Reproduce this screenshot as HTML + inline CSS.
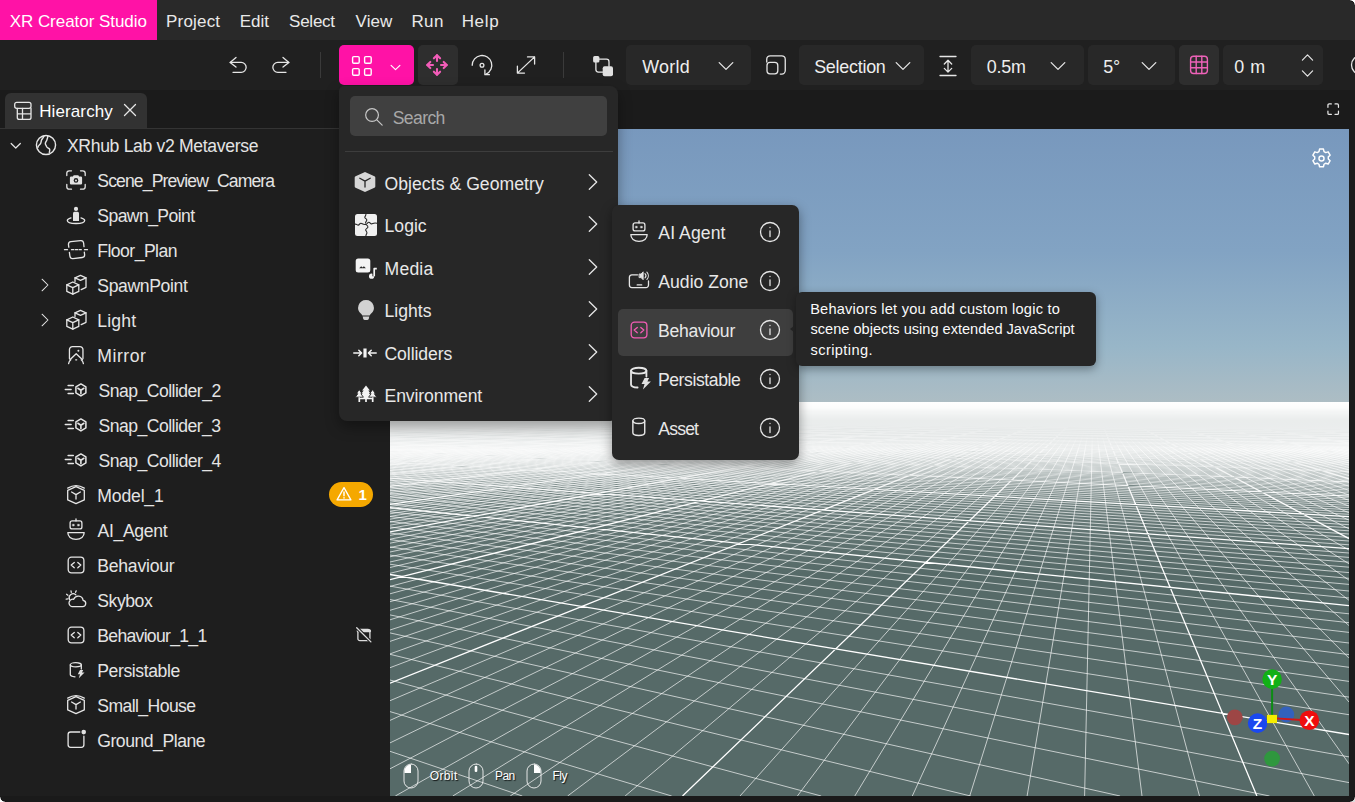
<!DOCTYPE html>
<html lang="en"><head><meta charset="utf-8"><title>XR Creator Studio</title>
<style>
*{box-sizing:border-box;margin:0;padding:0}
html,body{width:1355px;height:802px;overflow:hidden;background:#1b1b1b}
body{position:relative;font-family:"Liberation Sans",sans-serif;color:#f2f2f2;font-size:17px}
.abs{position:absolute}
svg{display:block;overflow:visible}
.ic{position:absolute;fill:none;stroke:#e6e6e6;stroke-width:1.3;stroke-linecap:round;stroke-linejoin:round}
.t{position:absolute;white-space:nowrap;line-height:20px;height:20px}
#menubar{left:0;top:0;width:1355px;height:40px;background:#292929}
#brand{left:0;top:0;width:157px;height:40px;background:#ff12a6}
.mi{color:#e9e9e9}
#toolbar{left:0;top:40px;width:1355px;height:50px;background:#202020}
.tb{position:absolute;top:45px;height:40px;border-radius:5px;background:#282828}
.tbt{color:#eeeeee}
.sep{position:absolute;top:52px;width:1px;height:26px;background:#3a3a3a}
#tabrow{left:0;top:90px;width:1355px;height:39px;background:#1b1b1b}
#tab{left:5px;top:93px;width:142px;height:35.5px;background:#323232;border-radius:6px 6px 0 0}
#tabline{left:0;top:128px;width:390px;height:1px;background:#343434}
#left{left:0;top:129px;width:390px;height:667px;background:#1e1e1e}
.row{color:#e4e4e4}
#vp{left:390px;top:129px;width:959px;height:667px;overflow:hidden;background:#566a68}
.vp{position:absolute;left:0;top:-1px}
#rightedge{left:1349px;top:90px;width:6px;height:712px;background:#1b1b1b}
#bottomedge{left:0;top:795.7px;width:1355px;height:6.3px;background:#1a1a1a}
#menu{left:339px;top:85.7px;width:279px;height:335.3px;background:#272727;border-radius:5px 8px 8px 8px;box-shadow:0 6px 14px rgba(0,0,0,.35)}
#search{left:11px;top:10.3px;width:257px;height:39.7px;background:#404040;border-radius:5px}
#mdiv{left:6px;top:65.2px;width:268px;height:1px;background:#3d3d3d}
.m1{color:#e8e8e8}
#sub{left:612px;top:205px;width:187px;height:255px;background:#272727;border-radius:7px;box-shadow:0 4px 12px rgba(0,0,0,.4)}
#hl{left:6px;top:104px;width:174.5px;height:46.5px;background:#3e3e3e;border-radius:5px}
#tip{left:796px;top:291.7px;width:300px;height:74.8px;background:#262626;border-radius:6px;box-shadow:0 3px 10px rgba(0,0,0,.35)}
.tp{color:#fafafa}
#badge{left:328.8px;top:481.7px;width:44.4px;height:25.3px;border-radius:13px;background:#f5a800}
.hint{color:#fff;text-shadow:1px 1px 1px rgba(0,0,0,.8)}
.cn{position:absolute;width:5px;height:5px}
#ctr{right:0;top:0;background:radial-gradient(circle at 0 100%,rgba(255,255,255,0) 3.6px,#000 4.2px,#fff 5px)}
#cbr{right:0;bottom:0;background:radial-gradient(circle at 0 0,rgba(255,255,255,0) 3.6px,#000 4.2px,#ddd 5px)}
#cbl{left:0;bottom:0;background:radial-gradient(circle at 100% 0,rgba(255,255,255,0) 3.6px,#000 4.2px,#fff 5px)}

</style></head>
<body>
<div class="abs" id="menubar"></div><div class="abs" id="brand"></div>
<div class="t mi" style="left:9.66px;top:12px;font-size:17px;letter-spacing:-0.040px;color:#fff">XR Creator Studio</div>
<div class="t mi" style="left:166.04px;top:12px;font-size:17px;letter-spacing:0.182px;">Project</div>
<div class="t mi" style="left:239.64px;top:12px;font-size:17px;letter-spacing:0.040px;">Edit</div>
<div class="t mi" style="left:289.04px;top:12px;font-size:17px;letter-spacing:-0.242px;">Select</div>
<div class="t mi" style="left:355.60px;top:12px;font-size:17px;letter-spacing:0.017px;">View</div>
<div class="t mi" style="left:411.44px;top:12px;font-size:17px;letter-spacing:0.392px;">Run</div>
<div class="t mi" style="left:461.64px;top:12px;font-size:17px;letter-spacing:0.702px;">Help</div>
<div class="abs" id="toolbar"></div>
<svg class="ic" style="left:227.5px;top:55.0px;" width="20" height="20" viewBox="0 0 20 20"><path d="M8 2.5L2.1 7.4 8 12.1"/><path d="M2.3 7.400H13.200a4.95 4.95 0 0 1 0 9.900H5"/></svg><svg class="ic" style="left:271.4px;top:55.0px;" width="20" height="20" viewBox="0 0 20 20"><path d="M12 2.5L17.9 7.4 12 12.1"/><path d="M17.7 7.400H6.800a4.95 4.95 0 0 0 0 9.900H15"/></svg>
<div class="sep" style="left:320px"></div><div class="sep" style="left:563px"></div>
<div class="tb" style="left:339.2px;width:74.6px;background:#ff12a6"></div>
<svg class="ic" style="left:350.4px;top:53.6px;stroke:#fff;stroke-width:1.4" width="24" height="24" viewBox="0 0 24 24"><rect x="2.6" y="2.6" width="6.6" height="6.6" rx="1.2"/><rect x="14.6" y="2.6" width="6.6" height="6.6" rx="1.2"/><rect x="2.6" y="14.6" width="6.6" height="6.6" rx="1.2"/><rect x="14.6" y="14.6" width="6.6" height="6.6" rx="1.2"/></svg><svg class="ic" style="left:389.1px;top:60.5px;stroke:#fff;stroke-width:1.8" width="13" height="13" viewBox="0 0 20 20"><path d="M3.2 6.6l6.8 6.8 6.8-6.8"/></svg>
<div class="tb" style="left:418px;width:40px;background:#2e2e2e"></div>
<svg class="ic" style="left:425.4px;top:52.9px;stroke:#f25cb8;stroke-width:2.1" width="24" height="24" viewBox="0 0 24 24"><path d="M12 2.4V8M12 16v5.6M2.4 12H8M16 12h5.6"/><path d="M8.9 5.3L12 2.2l3.1 3.1M8.9 18.7L12 21.8l3.1-3.1M5.3 8.9L2.2 12l3.1 3.1M18.7 8.9L21.8 12l-3.1 3.1"/></svg>
<svg class="ic" style="left:469.6px;top:53.4px;" width="24" height="24" viewBox="0 0 24 24"><path d="M2.2 12.3A9.8 9.8 0 1 1 16.1 21.2"/><path d="M14.9 17V21.7H19.4"/><circle cx="12" cy="12.3" r="1.9"/></svg><svg class="ic" style="left:513.7px;top:53.2px;" width="24" height="24" viewBox="0 0 24 24"><path d="M3.4 20.100L20.6 3.900M13.5 3.900H20.600V11M3.4 13.200V20.100H10.5"/></svg><svg class="ic" style="left:590.5px;top:53.5px;" width="24" height="24" viewBox="0 0 24 24"><rect x="2.1" y="2.1" width="6.3" height="6.4" rx="1.5" fill="#e0e0e0" stroke="none"/><rect x="11.7" y="12.2" width="10.3" height="10" rx="2" fill="#e0e0e0" stroke="none"/><path d="M8.3 5.200H15.500a2.5 2.5 0 0 1 2.5 2.500V12.200M4.9 8.500V15.600a2.5 2.5 0 0 0 2.5 2.500H11.7"/></svg>
<div class="tb" style="left:626px;width:125px"></div><div class="t tbt" style="left:642.30px;top:56.5px;font-size:17.9px;letter-spacing:0.228px;">World</div><svg class="ic" style="left:715.5px;top:56.3px;" width="20" height="20" viewBox="0 0 20 20"><path d="M3.2 6.6l6.8 6.8 6.8-6.8"/></svg>
<svg class="ic" style="left:763.8px;top:53.0px;" width="24" height="24" viewBox="0 0 24 24"><path d="M2.75 9V6.300a3.5 3.5 0 0 1 3.5-3.500H17.750a3.5 3.5 0 0 1 3.5 3.500V17.600a3.5 3.5 0 0 1-3.5 3.500H16.3"/><rect x="3" y="9.4" width="10.8" height="11.4" rx="3"/></svg>
<div class="tb" style="left:799px;width:125px"></div><div class="t tbt" style="left:814.19px;top:56.5px;font-size:17.9px;letter-spacing:-0.247px;">Selection</div><svg class="ic" style="left:892.6px;top:56.3px;" width="20" height="20" viewBox="0 0 20 20"><path d="M3.2 6.6l6.8 6.8 6.8-6.8"/></svg>
<svg class="ic" style="left:935.5px;top:53.5px;" width="24" height="24" viewBox="0 0 24 24"><path d="M4 2.500H20M4 21.500H20M12 6.300V18.100M8.3 10L12 6.3 15.7 10M8.3 14.400L12 18.100l3.7-3.7"/></svg>
<div class="tb" style="left:971px;width:113px"></div><div class="t tbt" style="left:986.77px;top:56.5px;font-size:17.9px;letter-spacing:-0.213px;">0.5m</div><svg class="ic" style="left:1047.7px;top:56.3px;" width="20" height="20" viewBox="0 0 20 20"><path d="M3.2 6.6l6.8 6.8 6.8-6.8"/></svg>
<div class="tb" style="left:1088px;width:87px"></div><div class="t tbt" style="left:1103.28px;top:56.5px;font-size:17.9px;letter-spacing:-0.304px;">5°</div><svg class="ic" style="left:1139.4px;top:56.3px;" width="20" height="20" viewBox="0 0 20 20"><path d="M3.2 6.6l6.8 6.8 6.8-6.8"/></svg>
<div class="tb" style="left:1179px;width:40px;background:#2e2e2e"></div><svg class="ic" style="left:1186.5px;top:53.4px;stroke:#ee62b8;stroke-width:1.4" width="24" height="24" viewBox="0 0 24 24"><rect x="3.6" y="3.3" width="16.8" height="17.2" rx="3"/><path d="M3.6 9h16.800M3.6 14.800h16.800M9.2 3.300v17.200M14.8 3.300v17.2"/></svg>
<div class="tb" style="left:1223px;width:100px"></div><div class="t tbt" style="left:1234.37px;top:56.5px;font-size:17.9px;letter-spacing:0.449px;">0 m</div><svg class="ic" style="left:1300.0px;top:49.5px;stroke-width:1.6" width="15" height="15" viewBox="0 0 20 20"><path d="M3.2 13.4l6.8-6.8 6.8 6.8"/></svg><svg class="ic" style="left:1300.0px;top:65.5px;stroke-width:1.6" width="15" height="15" viewBox="0 0 20 20"><path d="M3.2 6.6l6.8 6.8 6.8-6.8"/></svg>
<svg class="ic" style="left:1350px;top:55px" width="5" height="20" viewBox="0 0 5 20"><circle cx="11" cy="10" r="9.5"/></svg>
<div class="abs" id="tabrow"></div><div class="abs" id="tab"></div><div class="abs" id="left"></div><div class="abs" id="tabline"></div>
<svg class="ic" style="left:12.5px;top:100.8px;" width="20" height="20" viewBox="0 0 20 20"><rect x="1.7" y="1.4" width="16.3" height="5.9" rx="2"/><path d="M4.3 7.300V16.400a2 2 0 0 0 2 2H16a2 2 0 0 0 2-2V7.300M9.5 7.300V18.400M4.3 12.900H18"/></svg><div class="t mi" style="left:39.14px;top:101.5px;font-size:17px;letter-spacing:0.125px;color:#fff">Hierarchy</div><svg class="ic" style="left:120.1px;top:100.4px;" width="20" height="20" viewBox="0 0 20 20"><path d="M4.5 4.5l11 11M15.5 4.5l-11 11"/></svg>
<svg class="ic" style="left:1326.8px;top:102.8px;stroke-width:2" width="12.4" height="12.4" viewBox="0 0 20 20"><path d="M1.5 7V3.500a2 2 0 0 1 2-2H7M13 1.500h3.500a2 2 0 0 1 2 2V7M18.5 13v3.500a2 2 0 0 1-2 2H13M7 18.500H3.500a2 2 0 0 1-2-2V13"/></svg>
<svg class="ic" style="left:8.8px;top:138.6px;stroke-width:1.8" width="13.5" height="13.5" viewBox="0 0 20 20"><path d="M3.2 6.6l6.8 6.8 6.8-6.8"/></svg><svg class="ic" style="left:34.6px;top:133.5px;" width="22" height="22" viewBox="0 0 20 20"><circle cx="10" cy="10" r="8.7"/><path d="M8.2 1.7c-.4 1.5-1.5 2.3-2.2 3.7-.6 1.2-.200 2.6-1.2 3.7C4 10 3 10.5 2.6 12M11.5 1.500c.6 1.2-.3 2.3-.6 3.6-.3 1.4-1.4 2.1-1.5 3.4-.1 1.3 1 1.9 1.2 3 .3 1.3 1.8 1.3 2.6 2.2.7.8 0 1.9-.2 3"/></svg><div class="t row" style="left:66.95px;top:136px;font-size:17.6px;letter-spacing:-0.331px;">XRhub Lab v2 Metaverse</div>
<svg class="ic" style="left:65.5px;top:169.5px;" width="20" height="20" viewBox="0 0 20 20"><path d="M0.8 5.500V3.300A2.5 2.5 0 0 1 3.3.8H5.500M14.5.8h2.200a2.5 2.5 0 0 1 2.5 2.500V5.500M19.2 14.500v2.200a2.5 2.5 0 0 1-2.5 2.500H14.500M5.5 19.200H3.300a2.5 2.5 0 0 1-2.5-2.500V14.5"/><path d="M3.9 7.800a1.3 1.3 0 0 1 1.3-1.300h1.7l.8-1.200h4.600l.8 1.200h1.7a1.3 1.3 0 0 1 1.3 1.300v5.500a1.3 1.3 0 0 1-1.3 1.300H5.200a1.3 1.3 0 0 1-1.3-1.300z" fill="#e2e2e2" stroke="none"/><circle cx="10" cy="10.4" r="2.3" fill="#1e1e1e" stroke="none"/><circle cx="10" cy="10.4" r="1" fill="#e2e2e2" stroke="none"/></svg><div class="t row" style="left:97.31px;top:171px;font-size:17.6px;letter-spacing:-0.887px;">Scene_Preview_Camera</div>
<svg class="ic" style="left:65.5px;top:204.5px;" width="20" height="20" viewBox="0 0 20 20"><circle cx="10" cy="3.9" r="2.1" fill="#e2e2e2" stroke="none"/><path d="M7 8.300a1.5 1.5 0 0 1 1.5-1.500h3A1.5 1.5 0 0 1 13 8.300V16H7z" fill="#e2e2e2" stroke="none"/><path d="M5 12.800c-2.2.6-3.7 1.6-3.7 2.7 0 1.8 3.9 3 8.7 3s8.7-1.2 8.7-3c0-1.1-1.5-2.1-3.7-2.7"/></svg><div class="t row" style="left:97.31px;top:206px;font-size:17.6px;letter-spacing:-0.587px;">Spawn_Point</div>
<svg class="ic" style="left:63.5px;top:239.7px;" width="24" height="20" viewBox="0 0 24 20"><path d="M4.8 7.200l-.3-2.400a2.8 2.8 0 0 1 2.4-3.100l9.6-1.100a2.8 2.8 0 0 1 3.1 2.400l.4 3.600M20.3 12.200l.3 2.200a2.8 2.8 0 0 1-2.4 3.100l-9.2 1.100a2.8 2.8 0 0 1-3.1-2.400L5.4 12.3"/><path d="M.5 9.7h3M7.5 9.7h2.200M11.3 9.7h2.400M15.3 9.7h2M20.5 9.7h3"/></svg><div class="t row" style="left:97.19px;top:241px;font-size:17.6px;letter-spacing:-0.526px;">Floor_Plan</div>
<svg class="ic" style="left:64.5px;top:274.6px;" width="22" height="20" viewBox="0 0 22 20"><path d="M7.8 7L1.8 9.800V16.400L7.8 19.2 13.8 16.400V9.800z"/><path d="M1.8 9.800L7.8 12.6 13.8 9.800M7.8 12.600V19.2"/><path d="M10 6.500V2.800L15.5.3 21 2.800V12.300L16.2 14.6"/><path d="M10 2.800L15.5 5.3 21 2.8"/></svg><div class="t row" style="left:97.31px;top:276px;font-size:17.6px;letter-spacing:-0.367px;">SpawnPoint</div>
<svg class="ic" style="left:37.3px;top:277.0px;" width="16" height="16" viewBox="0 0 20 20"><path d="M6.3 2.800l7.4 7.2-7.4 7.2"/></svg>
<svg class="ic" style="left:64.5px;top:309.6px;" width="22" height="20" viewBox="0 0 22 20"><path d="M7.8 7L1.8 9.800V16.400L7.8 19.2 13.8 16.400V9.800z"/><path d="M1.8 9.800L7.8 12.6 13.8 9.800M7.8 12.600V19.2"/><path d="M10 6.500V2.800L15.5.3 21 2.800V12.300L16.2 14.6"/><path d="M10 2.800L15.5 5.3 21 2.8"/></svg><div class="t row" style="left:97.29px;top:311px;font-size:17.6px;letter-spacing:0.176px;">Light</div>
<svg class="ic" style="left:37.3px;top:312.0px;" width="16" height="16" viewBox="0 0 20 20"><path d="M6.3 2.800l7.4 7.2-7.4 7.2"/></svg>
<svg class="ic" style="left:65.5px;top:344.0px;" width="20" height="21" viewBox="0 0 20 21"><path d="M3.45 14.500V5.600a3 3 0 0 1 3-3h7.500a3 3 0 0 1 3 3V14.5"/><path d="M3.9 15.800L10.2 9.7 16.55 15.8"/><path d="M2.6 19.7c.2-1.6.9-2.9 2.2-3.900M17.4 19.7c-.2-1.6-.9-2.9-2.2-3.900M9.7 15.800h1"/><circle cx="12.4" cy="6.65" r="1" fill="#e2e2e2" stroke="none"/></svg><div class="t row" style="left:97.29px;top:346px;font-size:17.6px;letter-spacing:0.530px;">Mirror</div>
<svg class="ic" style="left:64.0px;top:379.9px;" width="24" height="20" viewBox="0 0 24 20"><path d="M4.1 5.600H9.300M1.3 9.500H7.100M4.1 13.600H9.3" stroke-width="1.5"/><path d="M16.9 3.900L11.9 6.900V12.900L16.9 15.9 21.9 12.900V6.900z" stroke-width="1.5"/><path d="M13.9 8.300L16.9 10.2 19.9 8.300M16.9 10.200V13.8" stroke-width="1.6"/></svg><div class="t row" style="left:98.51px;top:381px;font-size:17.6px;letter-spacing:-0.526px;">Snap_Collider_2</div>
<svg class="ic" style="left:64.0px;top:414.9px;" width="24" height="20" viewBox="0 0 24 20"><path d="M4.1 5.600H9.300M1.3 9.500H7.100M4.1 13.600H9.3" stroke-width="1.5"/><path d="M16.9 3.900L11.9 6.900V12.900L16.9 15.9 21.9 12.900V6.900z" stroke-width="1.5"/><path d="M13.9 8.300L16.9 10.2 19.9 8.300M16.9 10.200V13.8" stroke-width="1.6"/></svg><div class="t row" style="left:98.51px;top:416px;font-size:17.6px;letter-spacing:-0.533px;">Snap_Collider_3</div>
<svg class="ic" style="left:64.0px;top:449.9px;" width="24" height="20" viewBox="0 0 24 20"><path d="M4.1 5.600H9.300M1.3 9.500H7.100M4.1 13.600H9.3" stroke-width="1.5"/><path d="M16.9 3.900L11.9 6.900V12.900L16.9 15.9 21.9 12.900V6.900z" stroke-width="1.5"/><path d="M13.9 8.300L16.9 10.2 19.9 8.300M16.9 10.200V13.8" stroke-width="1.6"/></svg><div class="t row" style="left:98.51px;top:451px;font-size:17.6px;letter-spacing:-0.516px;">Snap_Collider_4</div>
<svg class="ic" style="left:65.5px;top:484.4px;" width="20" height="20" viewBox="0 0 20 20"><path d="M1.7 4.100Q10-.9 18.3 4.1"/><path d="M10 2.600L1.7 6.400V15.900L10 19.6 18.3 15.900V6.400z"/><path d="M5.6 8L10 10.6 14.4 8M10 10.600V15"/></svg><div class="t row" style="left:97.29px;top:486px;font-size:17.6px;letter-spacing:-0.166px;">Model_1</div>
<svg class="ic" style="left:65.5px;top:519.0px;" width="20" height="21" viewBox="0 0 20 21"><rect x="4.1" y="1.9" width="11.8" height="8" rx="2"/><path d="M10 0V1.9"/><rect x="6.7" y="5.3" width="1.5" height="1.6" fill="#e2e2e2" stroke-width=".5"/><rect x="11.8" y="5.3" width="1.5" height="1.6" fill="#e2e2e2" stroke-width=".5"/><path d="M1.8 13.600H18.200C18.2 17.5 15 20.4 10 20.400S1.8 17.5 1.8 13.600z"/></svg><div class="t row" style="left:97.60px;top:521px;font-size:17.6px;letter-spacing:-0.348px;">AI_Agent</div>
<svg class="ic" style="left:65.5px;top:554.6px;" width="20" height="20" viewBox="0 0 20 20"><rect x="2.2" y="2.2" width="15.7" height="15.7" rx="3.3"/><path d="M8.3 7.500L5.2 10.1 8.3 12.7M11.8 7.500L14.8 10.1 11.8 12.7"/></svg><div class="t row" style="left:97.29px;top:556px;font-size:17.6px;letter-spacing:-0.239px;">Behaviour</div>
<svg class="ic" style="left:64.5px;top:590.0px;" width="22" height="20" viewBox="0 0 22 20"><path d="M7 16.7H17.500a3.2 3.2 0 0 0 .6-6.35 4.9 4.9 0 0 0-9.4-1.100A3.6 3.6 0 0 0 7 16.7z"/><path d="M4.5 9.400a4 4 0 0 1 6.3-4.600M6 .8l.3 1.500M11.2 .8l-.6 1.500M1.6 4.300l1.3.9M1.2 9.100l1.7-.2"/></svg><div class="t row" style="left:97.31px;top:591px;font-size:17.6px;letter-spacing:-0.452px;">Skybox</div>
<svg class="ic" style="left:65.5px;top:624.6px;" width="20" height="20" viewBox="0 0 20 20"><rect x="2.2" y="2.2" width="15.7" height="15.7" rx="3.3"/><path d="M8.3 7.500L5.2 10.1 8.3 12.7M11.8 7.500L14.8 10.1 11.8 12.7"/></svg><div class="t row" style="left:97.29px;top:626px;font-size:17.6px;letter-spacing:-0.705px;">Behaviour_1_1</div>
<svg class="ic" style="left:65.5px;top:660.0px;" width="20" height="20" viewBox="0 0 20 20"><ellipse cx="9.8" cy="4.8" rx="5.5" ry="2.1"/><path d="M4.3 4.800V14.600c0 1.2 2.1 2.1 4.7 2.200M15.3 4.800V9"/><path d="M14 10h3.200l-1.2 2.500h2.500L12.8 18.300l1.2-4H11.800z" fill="#e2e2e2" stroke="none"/></svg><div class="t row" style="left:97.29px;top:661px;font-size:17.6px;letter-spacing:-0.412px;">Persistable</div>
<svg class="ic" style="left:65.5px;top:694.4px;" width="20" height="20" viewBox="0 0 20 20"><path d="M1.7 4.100Q10-.9 18.3 4.1"/><path d="M10 2.600L1.7 6.400V15.900L10 19.6 18.3 15.900V6.400z"/><path d="M5.6 8L10 10.6 14.4 8M10 10.600V15"/></svg><div class="t row" style="left:97.31px;top:696px;font-size:17.6px;letter-spacing:-0.584px;">Small_House</div>
<svg class="ic" style="left:65.5px;top:730.0px;" width="20" height="20" viewBox="0 0 20 20"><path d="M13.8 2H4.600A2.5 2.5 0 0 0 2.1 4.500V14.800a2.5 2.5 0 0 0 2.5 2.500H15.400a2.5 2.5 0 0 0 2.5-2.500V6.2"/><circle cx="17.7" cy="2.1" r="2.3" fill="#e2e2e2" stroke="none"/></svg><div class="t row" style="left:97.22px;top:731px;font-size:17.6px;letter-spacing:-0.467px;">Ground_Plane</div>
<div class="abs" id="badge"></div><svg class="ic" style="left:336.0px;top:486.2px;stroke:#fff;stroke-width:1.3" width="16" height="16" viewBox="0 0 16 16"><path d="M8 1.600L14.9 13.900H1.100z"/><path d="M8 6v3.800M8 11.7v.3" stroke-width="1.5"/></svg><div class="t row" style="left:358.60px;top:485.3px;font-size:15px;color:#fff;font-weight:bold">1</div>
<svg class="ic" style="left:355.8px;top:626.8px;stroke:#ddd" width="16" height="16" viewBox="0 0 16 16"><rect x="1.9" y="2.3" width="12" height="11.4" rx="2"/><path d="M2 3.900h11.8" stroke-width="2.6"/><path d="M1 1l14.2 14.2" stroke="#1e1e1e" stroke-width="3.2"/><path d="M0.7 .7l14.2 14.2"/></svg>
<div class="abs" id="vp"><svg class="vp" width="959" height="668" viewBox="0 0 959 668">
<defs>
<linearGradient id="sky" x1="0" y1="0" x2="0" y2="1">
<stop offset="0" stop-color="#7898bd"/><stop offset="0.45" stop-color="#82a3c3"/><stop offset="0.8" stop-color="#98b6c8"/><stop offset="1" stop-color="#adbdc4"/>
</linearGradient>
<linearGradient id="fog" x1="0" y1="0" x2="0" y2="1">
<stop offset="0.000" stop-color="#fff" stop-opacity="1"/><stop offset="0.020" stop-color="#fff" stop-opacity="0.98"/><stop offset="0.040" stop-color="#fff" stop-opacity="0.9"/><stop offset="0.060" stop-color="#fff" stop-opacity="0.8"/><stop offset="0.087" stop-color="#fff" stop-opacity="0.7"/><stop offset="0.120" stop-color="#fff" stop-opacity="0.56"/><stop offset="0.160" stop-color="#fff" stop-opacity="0.42"/><stop offset="0.210" stop-color="#fff" stop-opacity="0.3"/><stop offset="0.260" stop-color="#fff" stop-opacity="0.22"/><stop offset="0.327" stop-color="#fff" stop-opacity="0.15"/><stop offset="0.427" stop-color="#fff" stop-opacity="0.07"/><stop offset="0.577" stop-color="#fff" stop-opacity="0"/>
</linearGradient>
<linearGradient id="mg" gradientUnits="userSpaceOnUse" x1="0" y1="274" x2="0" y2="424">
<stop offset="0" stop-color="#000"/><stop offset="0.1" stop-color="#2a2a2a"/><stop offset="0.3" stop-color="#808080"/><stop offset="0.5" stop-color="#d8d8d8"/><stop offset="0.65" stop-color="#fff"/>
</linearGradient>
<linearGradient id="mg2" gradientUnits="userSpaceOnUse" x1="0" y1="282" x2="0" y2="322"><stop offset="0" stop-color="#000"/><stop offset="1" stop-color="#fff"/></linearGradient>
<mask id="mk2" maskUnits="userSpaceOnUse" x="0" y="0" width="959" height="668"><rect x="0" y="0" width="959" height="668" fill="url(#mg2)"/></mask>
<mask id="mk" maskUnits="userSpaceOnUse" x="0" y="0" width="959" height="668"><rect x="0" y="0" width="959" height="668" fill="url(#mg)"/></mask>
</defs>
<rect x="0" y="0" width="959" height="274" fill="url(#sky)"/>
<rect x="0" y="274" width="959" height="394" fill="#566a68"/>
<path d="M0.4 285.0L0.0 285.0M3.6 285.0L0.0 285.1M5.2 285.0L0.0 285.1M6.8 285.0L-0.0 285.1M8.4 285.0L0.0 285.1M10.0 285.0L0.0 285.2M11.6 285.0L0.0 285.2M13.2 285.0L0.0 285.2M14.9 285.0L0.0 285.2M16.5 285.0L0.0 285.3M19.7 285.0L0.0 285.3M21.3 285.0L0.0 285.3M22.9 285.0L0.0 285.4M24.5 285.0L0.0 285.4M26.1 285.0L0.0 285.4M27.7 285.0L0.0 285.5M29.3 285.0L0.0 285.5M30.9 285.0L-0.0 285.5M32.5 285.0L0.0 285.5M35.7 285.0L0.0 285.6M37.3 285.0L0.0 285.6M38.9 285.0L0.0 285.6M40.5 285.0L0.0 285.7M42.1 285.0L0.0 285.7M43.7 285.0L0.0 285.7M45.3 285.0L0.0 285.8M46.9 285.0L0.0 285.8M48.5 285.0L-0.0 285.8M51.7 285.0L0.0 285.9M53.3 285.0L0.0 285.9M54.9 285.0L0.0 285.9M56.5 285.0L0.0 286.0M58.1 285.0L0.0 286.0M59.8 285.0L0.0 286.0M61.4 285.0L0.0 286.1M63.0 285.0L0.0 286.1M64.6 285.0L0.0 286.1M67.8 285.0L0.0 286.2M69.4 285.0L0.0 286.2M71.0 285.0L0.0 286.2M72.6 285.0L0.0 286.3M74.2 285.0L0.0 286.3M75.8 285.0L0.0 286.3M77.4 285.0L0.0 286.4M79.0 285.0L0.0 286.4M80.6 285.0L0.0 286.4M83.8 285.0L0.0 286.5M85.4 285.0L0.0 286.5M87.0 285.0L0.0 286.6M88.6 285.0L0.0 286.6M90.2 285.0L0.0 286.6M91.8 285.0L0.0 286.7M93.4 285.0L0.0 286.7M95.0 285.0L0.0 286.7M96.6 285.0L0.0 286.8M99.8 285.0L0.0 286.8M101.4 285.0L0.0 286.9M103.0 285.0L0.0 286.9M104.7 285.0L0.0 286.9M106.3 285.0L0.0 287.0M107.9 285.0L0.0 287.0M109.5 285.0L0.0 287.0M111.1 285.0L0.0 287.1M112.7 285.0L0.0 287.1M115.9 285.0L0.0 287.2M117.5 285.0L0.0 287.2M119.1 285.0L0.0 287.2M120.7 285.0L0.0 287.3M122.3 285.0L0.0 287.3M123.9 285.0L0.0 287.4M125.5 285.0L0.0 287.4M127.1 285.0L0.0 287.4M128.7 285.0L0.0 287.5M131.9 285.0L0.0 287.5M133.5 285.0L0.0 287.6M135.1 285.0L0.0 287.6M136.7 285.0L0.0 287.7M138.3 285.0L-0.0 287.7M139.9 285.0L0.0 287.7M141.5 285.0L0.0 287.8M143.1 285.0L-0.0 287.8M144.7 285.0L0.0 287.9M147.9 285.0L0.0 287.9M149.6 285.0L0.0 288.0M151.2 285.0L0.0 288.0M152.8 285.0L0.0 288.1M154.4 285.0L0.0 288.1M156.0 285.0L0.0 288.1M157.6 285.0L0.0 288.2M159.2 285.0L-0.0 288.2M160.8 285.0L-0.0 288.3M164.0 285.0L0.0 288.3M165.6 285.0L-0.0 288.4M167.2 285.0L0.0 288.4M168.8 285.0L0.0 288.5M170.4 285.0L0.0 288.5M172.0 285.0L0.0 288.6M173.6 285.0L0.0 288.6M175.2 285.0L0.0 288.7M176.8 285.0L0.0 288.7M180.0 285.0L0.0 288.8M181.6 285.0L0.0 288.8M183.2 285.0L0.0 288.9M184.8 285.0L0.0 288.9M186.4 285.0L0.0 289.0M188.0 285.0L0.0 289.0M189.6 285.0L0.0 289.1M191.2 285.0L0.0 289.1M192.8 285.0L0.0 289.2M196.1 285.0L0.0 289.3M197.7 285.0L0.0 289.3M199.3 285.0L0.0 289.4M200.9 285.0L0.0 289.4M202.5 285.0L0.0 289.4M204.1 285.0L0.0 289.5M205.7 285.0L0.0 289.5M207.3 285.0L0.0 289.6M208.9 285.0L0.0 289.7M212.1 285.0L0.0 289.8M213.7 285.0L0.0 289.8M215.3 285.0L0.0 289.9M216.9 285.0L0.0 289.9M218.5 285.0L0.0 290.0M220.1 285.0L0.0 290.0M221.7 285.0L-0.0 290.1M223.3 285.0L0.0 290.1M224.9 285.0L0.0 290.2M228.1 285.0L0.0 290.3M229.7 285.0L-0.0 290.3M231.3 285.0L0.0 290.4M232.9 285.0L0.0 290.5M234.5 285.0L0.0 290.5M236.1 285.0L0.0 290.6M237.7 285.0L0.0 290.6M239.4 285.0L0.0 290.7M241.0 285.0L0.0 290.7M244.2 285.0L-0.0 290.9M245.8 285.0L0.0 290.9M247.4 285.0L0.0 291.0M249.0 285.0L0.0 291.0M250.6 285.0L0.0 291.1M252.2 285.0L0.0 291.2M253.8 285.0L0.0 291.2M255.4 285.0L0.0 291.3M257.0 285.0L0.0 291.3M260.2 285.0L-0.0 291.5M261.8 285.0L0.0 291.5M263.4 285.0L0.0 291.6M265.0 285.0L0.0 291.7M266.6 285.0L0.0 291.7M268.2 285.0L0.0 291.8M269.8 285.0L0.0 291.9M271.4 285.0L0.0 291.9M273.0 285.0L0.0 292.0M276.2 285.0L0.0 292.1M277.8 285.0L0.0 292.2M279.4 285.0L0.0 292.3M281.0 285.0L0.0 292.3M282.6 285.0L0.0 292.4M284.3 285.0L0.0 292.5M285.9 285.0L0.0 292.5M287.5 285.0L0.0 292.6M289.1 285.0L0.0 292.7M292.3 285.0L0.0 292.8M293.9 285.0L0.0 292.9M295.5 285.0L0.0 293.0M297.1 285.0L0.0 293.1M298.7 285.0L-0.0 293.1M300.3 285.0L0.0 293.2M301.9 285.0L0.0 293.3M303.5 285.0L0.0 293.4M305.1 285.0L0.0 293.4M308.3 285.0L-0.0 293.6M309.9 285.0L0.0 293.7M311.5 285.0L0.0 293.8M313.1 285.0L0.0 293.8M314.7 285.0L0.0 293.9M316.3 285.0L0.0 294.0M317.9 285.0L0.0 294.1M319.5 285.0L0.0 294.2M321.1 285.0L0.0 294.3M324.3 285.0L0.0 294.4M325.9 285.0L0.0 294.5M327.5 285.0L0.0 294.6M329.2 285.0L0.0 294.7M330.8 285.0L0.0 294.8M332.4 285.0L0.0 294.9M334.0 285.0L0.0 295.0M335.6 285.0L0.0 295.0M337.2 285.0L0.0 295.1M340.4 285.0L0.0 295.3M342.0 285.0L0.0 295.4M343.6 285.0L0.0 295.5M345.2 285.0L0.0 295.6M346.8 285.0L0.0 295.7M348.4 285.0L0.0 295.8M350.0 285.0L0.0 295.9M351.6 285.0L0.0 296.0M353.2 285.0L0.0 296.1M356.4 285.0L0.0 296.3M358.0 285.0L0.0 296.4M359.6 285.0L0.0 296.5M361.2 285.0L0.0 296.6M362.8 285.0L0.0 296.7M364.4 285.0L0.0 296.8M366.0 285.0L0.0 296.9M367.6 285.0L0.0 297.1M369.2 285.0L0.0 297.2M372.4 285.0L0.0 297.4M374.1 285.0L0.0 297.5M375.7 285.0L0.0 297.6M377.3 285.0L0.0 297.7M378.9 285.0L0.0 297.9M380.5 285.0L0.0 298.0M382.1 285.0L0.0 298.1M383.7 285.0L0.0 298.2M385.3 285.0L0.0 298.3M388.5 285.0L0.0 298.6M390.1 285.0L-0.0 298.7M391.7 285.0L0.0 298.8M393.3 285.0L0.0 299.0M394.9 285.0L0.0 299.1M396.5 285.0L0.0 299.2M398.1 285.0L0.0 299.4M399.7 285.0L0.0 299.5M401.3 285.0L0.0 299.6M404.5 285.0L-0.0 299.9M406.1 285.0L0.0 300.0M407.7 285.0L0.0 300.2M409.3 285.0L0.0 300.3M410.9 285.0L-0.0 300.5M412.5 285.0L0.0 300.6M414.1 285.0L0.0 300.8M415.7 285.0L-0.0 300.9M417.3 285.0L0.0 301.1M420.6 285.0L0.0 301.4M422.2 285.0L0.0 301.5M423.8 285.0L0.0 301.7M425.4 285.0L0.0 301.9M427.0 285.0L0.0 302.0M428.6 285.0L0.0 302.2M430.2 285.0L0.0 302.3M431.8 285.0L0.0 302.5M433.4 285.0L0.0 302.7M436.6 285.0L0.0 303.0M438.2 285.0L0.0 303.2M439.8 285.0L0.0 303.4M441.4 285.0L0.0 303.6M443.0 285.0L0.0 303.7M444.6 285.0L0.0 303.9M446.2 285.0L0.0 304.1M447.8 285.0L0.0 304.3M449.4 285.0L0.0 304.5M452.6 285.0L0.0 304.9M454.2 285.0L0.0 305.1M455.8 285.0L0.0 305.3M457.4 285.0L0.0 305.5M459.0 285.0L0.0 305.7M460.6 285.0L0.0 305.9M462.2 285.0L0.0 306.1M463.9 285.0L0.0 306.3M465.5 285.0L0.0 306.6M468.7 285.0L0.0 307.0M470.3 285.0L0.0 307.2M471.9 285.0L0.0 307.5M473.5 285.0L0.0 307.7M475.1 285.0L0.0 307.9M476.7 285.0L0.0 308.2M478.3 285.0L0.0 308.4M479.9 285.0L0.0 308.7M481.5 285.0L0.0 308.9M484.7 285.0L0.0 309.4M486.3 285.0L-0.0 309.7M487.9 285.0L0.0 309.9M489.5 285.0L0.0 310.2M491.1 285.0L0.0 310.5M492.7 285.0L0.0 310.8M494.3 285.0L0.0 311.1M495.9 285.0L0.0 311.3M497.5 285.0L0.0 311.6M500.7 285.0L0.0 312.2M502.3 285.0L0.0 312.5M503.9 285.0L0.0 312.8M505.5 285.0L0.0 313.2M507.1 285.0L0.0 313.5M508.8 285.0L0.0 313.8M510.4 285.0L0.0 314.1M512.0 285.0L0.0 314.5M513.6 285.0L0.0 314.8M516.8 285.0L0.0 315.5M518.4 285.0L0.0 315.9M520.0 285.0L0.0 316.2M521.6 285.0L0.0 316.6M523.2 285.0L0.0 317.0M524.8 285.0L0.0 317.4M526.4 285.0L0.0 317.8M528.0 285.0L0.0 318.2M529.6 285.0L0.0 318.6M532.8 285.0L0.0 319.4M534.4 285.0L-0.0 319.9M536.0 285.0L0.0 320.3M537.6 285.0L0.0 320.8M539.2 285.0L0.0 321.2M540.8 285.0L0.0 321.7M542.4 285.0L0.0 322.2M544.0 285.0L0.0 322.6M545.6 285.0L0.0 323.1M548.8 285.0L0.0 324.2M550.4 285.0L0.0 324.7M552.0 285.0L0.0 325.2M553.7 285.0L0.0 325.8M555.3 285.0L0.0 326.3M556.9 285.0L0.0 326.9M558.5 285.0L0.0 327.5M560.1 285.0L0.0 328.1M561.7 285.0L0.0 328.7M564.9 285.0L0.0 330.0M566.5 285.0L0.0 330.6M568.1 285.0L0.0 331.3M569.7 285.0L-0.0 332.0M571.3 285.0L0.0 332.7M572.9 285.0L0.0 333.4M574.5 285.0L0.0 334.2M576.1 285.0L0.0 334.9M577.7 285.0L0.0 335.7M580.9 285.0L0.0 337.3M582.5 285.0L0.0 338.2M584.1 285.0L0.0 339.0M585.7 285.0L0.0 339.9M587.3 285.0L0.0 340.8M588.9 285.0L0.0 341.8M590.5 285.0L0.0 342.7M592.1 285.0L0.0 343.7M593.7 285.0L0.0 344.8M596.9 285.0L0.0 346.9M598.6 285.0L-0.0 348.0M600.2 285.0L0.0 349.2M601.8 285.0L0.0 350.4M603.4 285.0L0.0 351.6M605.0 285.0L0.0 352.9M606.6 285.0L0.0 354.2M608.2 285.0L0.0 355.5M609.8 285.0L0.0 356.9M613.0 285.0L0.0 359.9M614.6 285.0L0.0 361.4M616.2 285.0L0.0 363.1M617.8 285.0L0.0 364.7M619.4 285.0L0.0 366.5M621.0 285.0L0.0 368.3M622.6 285.0L0.0 370.2M624.2 285.0L0.0 372.1M625.8 285.0L0.0 374.2M629.0 285.0L0.0 378.5M630.6 285.0L0.0 380.8M632.2 285.0L0.0 383.2M633.8 285.0L0.0 385.8M635.4 285.0L0.0 388.4M637.0 285.0L0.0 391.2M638.6 285.0L0.0 394.1M640.2 285.0L0.0 397.2M641.8 285.0L0.0 400.4M645.1 285.0L-0.0 407.4M646.7 285.0L0.0 411.2M648.3 285.0L0.0 415.2M649.9 285.0L0.0 419.5M651.5 285.0L0.0 424.0M653.1 285.0L0.0 428.8M654.7 285.0L0.0 434.0M656.3 285.0L0.0 439.5M657.9 285.0L0.0 445.3M661.1 285.0L0.0 458.4M662.7 285.0L-0.0 465.8M664.3 285.0L0.0 473.7M665.9 285.0L0.0 482.3M667.5 285.0L0.0 491.8M669.1 285.0L0.0 502.0M670.7 285.0L-0.0 513.4M672.3 285.0L0.0 525.9M673.9 285.0L0.0 539.7M677.1 285.0L0.0 572.7M678.7 285.0L0.0 592.4M680.3 285.0L0.0 614.9M681.9 285.0L0.0 640.8M683.5 285.0L5.3 668.0M685.1 285.0L62.8 668.0M686.7 285.0L120.2 668.0M688.4 285.0L177.6 668.0M690.0 285.0L235.1 668.0M693.2 285.0L350.0 668.0M694.8 285.0L407.4 668.0M696.4 285.0L464.8 668.0M698.0 285.0L522.3 668.0M699.6 285.0L579.7 668.0M701.2 285.0L637.1 668.0M702.8 285.0L694.6 668.0M704.4 285.0L752.0 668.0M706.0 285.0L809.5 668.0M709.2 285.0L924.3 668.0M710.8 285.0L959.0 635.8M712.4 285.0L959.0 574.0M714.0 285.0L959.0 530.2M715.6 285.0L959.0 497.6M717.2 285.0L959.0 472.3M718.8 285.0L959.0 452.2M720.4 285.0L959.0 435.8M722.0 285.0L959.0 422.1M725.2 285.0L959.0 400.8M726.8 285.0L959.0 392.2M728.4 285.0L959.0 384.8M730.0 285.0L959.0 378.2M731.6 285.0L959.0 372.4M733.2 285.0L959.0 367.1M734.9 285.0L959.0 362.4M736.5 285.0L959.0 358.2M738.1 285.0L959.0 354.4M741.3 285.0L959.0 347.6M742.9 285.0L959.0 344.7M744.5 285.0L959.0 341.9M746.1 285.0L959.0 339.4M747.7 285.0L959.0 337.0M749.3 285.0L959.0 334.9M750.9 285.0L959.0 332.8M752.5 285.0L959.0 330.9M754.1 285.0L959.0 329.1M757.3 285.0L959.0 325.9M758.9 285.0L959.0 324.4M760.5 285.0L959.0 323.0M762.1 285.0L959.0 321.6M763.7 285.0L959.0 320.4M765.3 285.0L959.0 319.2M766.9 285.0L959.0 318.1M768.5 285.0L959.0 317.0M770.1 285.0L959.0 316.0M773.3 285.0L959.0 314.0M774.9 285.0L959.0 313.1M776.5 285.0L959.0 312.3M778.1 285.0L959.0 311.5M779.8 285.0L959.0 310.7M781.4 285.0L959.0 309.9M783.0 285.0L959.0 309.2M784.6 285.0L959.0 308.5M786.2 285.0L959.0 307.9M789.4 285.0L959.0 306.6M791.0 285.0L959.0 306.0M792.6 285.0L959.0 305.4M794.2 285.0L959.0 304.9M795.8 285.0L959.0 304.4M797.4 285.0L959.0 303.8M799.0 285.0L959.0 303.3M800.6 285.0L959.0 302.9M802.2 285.0L959.0 302.4M805.4 285.0L959.0 301.5M807.0 285.0L959.0 301.1M808.6 285.0L959.0 300.7M810.2 285.0L959.0 300.3M811.8 285.0L959.0 299.9M813.4 285.0L959.0 299.5M815.0 285.0L959.0 299.1M816.6 285.0L959.0 298.8M818.2 285.0L959.0 298.4M821.4 285.0L959.0 297.8M823.0 285.0L959.0 297.5M824.7 285.0L959.0 297.1M826.3 285.0L959.0 296.8M827.9 285.0L959.0 296.6M829.5 285.0L959.0 296.3M831.1 285.0L959.0 296.0M832.7 285.0L959.0 295.7M834.3 285.0L959.0 295.5M837.5 285.0L959.0 294.9M839.1 285.0L959.0 294.7M840.7 285.0L959.0 294.5M842.3 285.0L959.0 294.2M843.9 285.0L959.0 294.0M845.5 285.0L959.0 293.8M847.1 285.0L959.0 293.5M848.7 285.0L959.0 293.3M850.3 285.0L959.0 293.1M853.5 285.0L959.0 292.7M855.1 285.0L959.0 292.5M856.7 285.0L959.0 292.3M858.3 285.0L959.0 292.1M859.9 285.0L959.0 291.9M861.5 285.0L959.0 291.8M863.1 285.0L959.0 291.6M864.7 285.0L959.0 291.4M866.3 285.0L959.0 291.2M869.6 285.0L959.0 290.9M871.2 285.0L959.0 290.7M872.8 285.0L959.0 290.6M874.4 285.0L959.0 290.4M876.0 285.0L959.0 290.3M877.6 285.0L959.0 290.1M879.2 285.0L959.0 290.0M880.8 285.0L959.0 289.8M882.4 285.0L959.0 289.7M885.6 285.0L959.0 289.4M887.2 285.0L959.0 289.3M888.8 285.0L959.0 289.2M890.4 285.0L959.0 289.0M892.0 285.0L959.0 288.9M893.6 285.0L959.0 288.8M895.2 285.0L959.0 288.7M896.8 285.0L959.0 288.5M898.4 285.0L959.0 288.4M901.6 285.0L959.0 288.2M903.2 285.0L959.0 288.1M904.8 285.0L959.0 288.0M906.4 285.0L959.0 287.8M908.0 285.0L959.0 287.7M909.6 285.0L959.0 287.6M911.2 285.0L959.0 287.5M912.8 285.0L959.0 287.4M914.5 285.0L959.0 287.3M917.7 285.0L959.0 287.1M919.3 285.0L959.0 287.0M920.9 285.0L959.0 286.9M922.5 285.0L959.0 286.8M924.1 285.0L959.0 286.7M925.7 285.0L959.0 286.6M927.3 285.0L959.0 286.6M928.9 285.0L959.0 286.5M930.5 285.0L959.0 286.4M933.7 285.0L959.0 286.2M935.3 285.0L959.0 286.1M936.9 285.0L959.0 286.0M938.5 285.0L959.0 286.0M940.1 285.0L959.0 285.9M941.7 285.0L959.0 285.8M943.3 285.0L959.0 285.7M944.9 285.0L959.0 285.6M946.5 285.0L959.0 285.6M949.7 285.0L959.0 285.4M951.3 285.0L959.0 285.3M952.9 285.0L959.0 285.3M954.5 285.0L959.0 285.2M956.1 285.0L959.0 285.1M957.7 285.0L959.0 285.1M0.0 623.3L132.3 668.0M0.0 583.6L281.7 668.0M0.0 552.0L431.2 668.0M0.0 526.3L580.6 668.0M0.0 504.9L730.1 668.0M0.0 486.9L879.5 668.0M0.0 471.5L959.0 654.6M0.0 458.1L959.0 628.9M0.0 436.2L959.0 586.7M0.0 427.1L959.0 569.1M0.0 419.0L959.0 553.4M0.0 411.6L959.0 539.3M0.0 405.0L959.0 526.6M0.0 399.0L959.0 515.0M0.0 393.5L959.0 504.4M0.0 388.5L959.0 494.7M0.0 383.9L959.0 485.8M0.0 375.7L959.0 470.0M0.0 372.0L959.0 463.0M0.0 368.6L959.0 456.4M0.0 365.5L959.0 450.3M0.0 362.5L959.0 444.6M0.0 359.7L959.0 439.2M0.0 357.1L959.0 434.2M0.0 354.6L959.0 429.4M0.0 352.3L959.0 425.0M0.0 348.1L959.0 416.8M0.0 346.1L959.0 413.0M0.0 344.2L959.0 409.4M0.0 342.5L959.0 406.0M0.0 340.8L959.0 402.8M0.0 339.2L959.0 399.7M0.0 337.7L959.0 396.7M0.0 336.2L959.0 393.9M0.0 334.8L959.0 391.3M0.0 332.2L959.0 386.3M0.0 331.0L959.0 383.9M0.0 329.8L959.0 381.7M0.0 328.7L959.0 379.5M0.0 327.6L959.0 377.4M0.0 326.6L959.0 375.4M0.0 325.6L959.0 373.5M0.0 324.7L959.0 371.6M0.0 323.7L959.0 369.9M0.0 322.0L959.0 366.5M0.0 321.2L959.0 364.9M0.0 320.4L959.0 363.3M0.0 319.6L959.0 361.9M0.0 318.8L959.0 360.4M0.0 318.1L959.0 359.0M0.0 317.4L959.0 357.7M0.0 316.7L959.0 356.3M0.0 316.1L959.0 355.1M0.0 314.8L959.0 352.6M0.0 314.2L959.0 351.5M0.0 313.6L959.0 350.4M0.0 313.0L959.0 349.3M0.0 312.5L959.0 348.2M0.0 312.0L959.0 347.2M0.0 311.4L959.0 346.2M0.0 310.9L959.0 345.2M0.0 310.4L959.0 344.2M0.0 309.5L959.0 342.4M0.0 309.0L959.0 341.5M0.0 308.6L959.0 340.7M0.0 308.2L959.0 339.8M0.0 307.7L959.0 339.0M0.0 307.3L959.0 338.2M0.0 306.9L959.0 337.4M0.0 306.5L959.0 336.7M0.0 306.1L959.0 336.0M0.0 305.4L959.0 334.5M0.0 305.0L959.0 333.8M0.0 304.7L959.0 333.2M0.0 304.4L959.0 332.5M0.0 304.0L959.0 331.9M0.0 303.7L959.0 331.2M0.0 303.4L959.0 330.6M0.0 303.1L959.0 330.0M0.0 302.7L959.0 329.4M0.0 302.2L959.0 328.3M0.0 301.9L959.0 327.7M0.0 301.6L959.0 327.2M0.0 301.3L959.0 326.6M0.0 301.0L959.0 326.1M0.0 300.8L959.0 325.6M0.0 300.5L959.0 325.1M0.0 300.3L959.0 324.6M0.0 300.0L959.0 324.1M0.0 299.5L959.0 323.2M0.0 299.3L959.0 322.7M0.0 299.1L959.0 322.3M0.0 298.8L959.0 321.8M0.0 298.6L959.0 321.4M0.0 298.4L959.0 321.0M0.0 298.2L959.0 320.6M0.0 297.9L959.0 320.2M0.0 297.7L959.0 319.8M0.0 297.3L959.0 319.0M0.0 297.1L959.0 318.6M0.0 296.9L959.0 318.2M0.0 296.8L959.0 317.9M0.0 296.6L959.0 317.5M0.0 296.4L959.0 317.1M0.0 296.2L959.0 316.8M0.0 296.0L959.0 316.4M0.0 295.8L959.0 316.1M0.0 295.5L959.0 315.4M0.0 295.3L959.0 315.1M0.0 295.2L959.0 314.8M0.0 295.0L959.0 314.5M0.0 294.8L959.0 314.2M0.0 294.7L959.0 313.9M0.0 294.5L959.0 313.6M0.0 294.4L959.0 313.3M0.0 294.2L959.0 313.0M0.0 293.9L959.0 312.4M0.0 293.8L959.0 312.1M0.0 293.6L959.0 311.9M0.0 293.5L959.0 311.6M0.0 293.4L959.0 311.3M0.0 293.2L959.0 311.0M0.0 293.1L959.0 310.8M0.0 293.0L959.0 310.5M0.0 292.8L959.0 310.3M0.0 292.6L959.0 309.8M0.0 292.4L959.0 309.5M0.0 292.3L959.0 309.3M0.0 292.2L959.0 309.1M0.0 292.1L959.0 308.8M0.0 292.0L959.0 308.6M0.0 291.8L959.0 308.4M0.0 291.7L959.0 308.2M0.0 291.6L959.0 307.9M0.0 291.4L959.0 307.5M0.0 291.3L959.0 307.3M0.0 291.2L959.0 307.1M0.0 291.1L959.0 306.9M0.0 290.9L959.0 306.7M0.0 290.8L959.0 306.5M0.0 290.7L959.0 306.3M0.0 290.6L959.0 306.1M0.0 290.5L959.0 305.9M0.0 290.3L959.0 305.5M0.0 290.2L959.0 305.3M0.0 290.1L959.0 305.1M0.0 290.1L959.0 304.9M0.0 290.0L959.0 304.8M0.0 289.9L959.0 304.6M0.0 289.8L959.0 304.4M0.0 289.7L959.0 304.2M0.0 289.6L959.0 304.1M0.0 289.4L959.0 303.7M0.0 289.3L959.0 303.5M0.0 289.2L959.0 303.4M0.0 289.2L959.0 303.2M0.0 289.1L959.0 303.1M0.0 289.0L959.0 302.9M0.0 288.9L959.0 302.7M0.0 288.8L959.0 302.6M0.0 288.7L959.0 302.4M0.0 288.6L959.0 302.1M0.0 288.5L959.0 302.0M0.0 288.4L959.0 301.8M0.0 288.4L959.0 301.7M0.0 288.3L959.0 301.5M0.0 288.2L959.0 301.4M0.0 288.1L959.0 301.2M0.0 288.1L959.0 301.1M0.0 288.0L959.0 301.0M0.0 287.8L959.0 300.7M0.0 287.8L959.0 300.6M0.0 287.7L959.0 300.4M0.0 287.6L959.0 300.3M0.0 287.6L959.0 300.2M0.0 287.5L959.0 300.0M0.0 287.4L959.0 299.9M0.0 287.4L959.0 299.8M0.0 287.3L959.0 299.7M0.0 287.2L959.0 299.4M0.0 287.1L959.0 299.3M0.0 287.1L959.0 299.2M0.0 287.0L959.0 299.0M0.0 286.9L959.0 298.9M0.0 286.9L959.0 298.8M0.0 286.8L959.0 298.7M0.0 286.7L959.0 298.6M0.0 286.7L959.0 298.5M0.0 286.6L959.0 298.2M0.0 286.5L959.0 298.1M0.0 286.5L959.0 298.0M0.0 286.4L959.0 297.9M0.0 286.3L959.0 297.8M0.0 286.3L959.0 297.7M0.0 286.2L959.0 297.6M0.0 286.2L959.0 297.5M0.0 286.1L959.0 297.4M0.0 286.0L959.0 297.2M0.0 286.0L959.0 297.1M0.0 285.9L959.0 297.0M0.0 285.9L959.0 296.9M0.0 285.8L959.0 296.8M0.0 285.8L959.0 296.7M0.0 285.7L959.0 296.6M0.0 285.7L959.0 296.5M0.0 285.6L959.0 296.4M0.0 285.5L959.0 296.2M0.0 285.5L959.0 296.1M0.0 285.4L959.0 296.0M0.0 285.4L959.0 295.9M0.0 285.3L959.0 295.8M0.0 285.3L959.0 295.7M0.0 285.2L959.0 295.6M0.0 285.2L959.0 295.5M0.0 285.1L959.0 295.5M0.0 285.0L959.0 295.3M0.1 285.0L959.0 295.2M4.3 285.0L959.0 295.1M8.5 285.0L959.0 295.0M12.6 285.0L959.0 294.9M16.8 285.0L959.0 294.9M21.0 285.0L959.0 294.8M25.1 285.0L959.0 294.7M29.3 285.0L959.0 294.6M37.7 285.0L959.0 294.5M41.8 285.0L959.0 294.4M46.0 285.0L959.0 294.3M50.2 285.0L959.0 294.2M54.4 285.0L959.0 294.1M58.5 285.0L959.0 294.1M62.7 285.0L959.0 294.0M66.9 285.0L959.0 293.9M71.0 285.0L959.0 293.8M79.4 285.0L959.0 293.7M83.6 285.0L959.0 293.6M87.7 285.0L959.0 293.5M91.9 285.0L959.0 293.5M96.1 285.0L959.0 293.4M100.3 285.0L959.0 293.3M104.4 285.0L959.0 293.3M108.6 285.0L959.0 293.2M112.8 285.0L959.0 293.1M121.1 285.0L959.0 293.0M125.3 285.0L959.0 292.9M129.5 285.0L959.0 292.8M133.6 285.0L959.0 292.8M137.8 285.0L959.0 292.7M142.0 285.0L959.0 292.6M146.2 285.0L959.0 292.6M150.3 285.0L959.0 292.5M154.5 285.0L959.0 292.4M162.8 285.0L959.0 292.3M167.0 285.0L959.0 292.3M171.2 285.0L959.0 292.2M175.4 285.0L959.0 292.1M179.5 285.0L959.0 292.1M183.7 285.0L959.0 292.0M187.9 285.0L959.0 291.9M192.0 285.0L959.0 291.9M196.2 285.0L959.0 291.8M204.6 285.0L959.0 291.7M208.7 285.0L959.0 291.6M212.9 285.0L959.0 291.6M217.1 285.0L959.0 291.5M221.3 285.0L959.0 291.5M225.4 285.0L959.0 291.4M229.6 285.0L959.0 291.4M233.8 285.0L959.0 291.3M237.9 285.0L959.0 291.2M246.3 285.0L959.0 291.1M250.5 285.0L959.0 291.1M254.6 285.0L959.0 291.0M258.8 285.0L959.0 291.0M263.0 285.0L959.0 290.9M267.2 285.0L959.0 290.8M271.3 285.0L959.0 290.8M275.5 285.0L959.0 290.7M279.7 285.0L959.0 290.7M288.0 285.0L959.0 290.6M292.2 285.0L959.0 290.5M296.4 285.0L959.0 290.5M300.5 285.0L959.0 290.4M304.7 285.0L959.0 290.4M308.9 285.0L959.0 290.3M313.1 285.0L959.0 290.3M317.2 285.0L959.0 290.2M321.4 285.0L959.0 290.2M329.7 285.0L959.0 290.1M333.9 285.0L959.0 290.0M338.1 285.0L959.0 290.0M342.3 285.0L959.0 289.9M346.4 285.0L959.0 289.9M350.6 285.0L959.0 289.8M354.8 285.0L959.0 289.8M359.0 285.0L959.0 289.7M363.1 285.0L959.0 289.7M371.5 285.0L959.0 289.6M375.6 285.0L959.0 289.6M379.8 285.0L959.0 289.5M384.0 285.0L959.0 289.5M388.2 285.0L959.0 289.4M392.3 285.0L959.0 289.4M396.5 285.0L959.0 289.3M400.7 285.0L959.0 289.3M404.8 285.0L959.0 289.2M413.2 285.0L959.0 289.1M417.4 285.0L959.0 289.1M421.5 285.0L959.0 289.1M425.7 285.0L959.0 289.0M429.9 285.0L959.0 289.0M434.1 285.0L959.0 288.9M438.2 285.0L959.0 288.9M442.4 285.0L959.0 288.8M446.6 285.0L959.0 288.8M454.9 285.0L959.0 288.7M459.1 285.0L959.0 288.7M463.3 285.0L959.0 288.6M467.4 285.0L959.0 288.6M471.6 285.0L959.0 288.6M475.8 285.0L959.0 288.5M480.0 285.0L959.0 288.5M484.1 285.0L959.0 288.4M488.3 285.0L959.0 288.4M496.6 285.0L959.0 288.3M500.8 285.0L959.0 288.3M505.0 285.0L959.0 288.2M509.2 285.0L959.0 288.2M513.3 285.0L959.0 288.2M517.5 285.0L959.0 288.1M521.7 285.0L959.0 288.1M525.9 285.0L959.0 288.1M530.0 285.0L959.0 288.0M538.4 285.0L959.0 287.9M542.5 285.0L959.0 287.9M546.7 285.0L959.0 287.9M550.9 285.0L959.0 287.8M555.1 285.0L959.0 287.8M559.2 285.0L959.0 287.8M563.4 285.0L959.0 287.7M567.6 285.0L959.0 287.7M571.7 285.0L959.0 287.7M580.1 285.0L959.0 287.6M584.3 285.0L959.0 287.5M588.4 285.0L959.0 287.5M592.6 285.0L959.0 287.5M596.8 285.0L959.0 287.4M601.0 285.0L959.0 287.4M605.1 285.0L959.0 287.4M609.3 285.0L959.0 287.3M613.5 285.0L959.0 287.3M621.8 285.0L959.0 287.2M626.0 285.0L959.0 287.2M630.2 285.0L959.0 287.2M634.3 285.0L959.0 287.1M638.5 285.0L959.0 287.1M642.7 285.0L959.0 287.1M646.9 285.0L959.0 287.0M651.0 285.0L959.0 287.0M655.2 285.0L959.0 287.0M663.5 285.0L959.0 286.9M667.7 285.0L959.0 286.9M671.9 285.0L959.0 286.9M676.1 285.0L959.0 286.8M680.2 285.0L959.0 286.8M684.4 285.0L959.0 286.8M688.6 285.0L959.0 286.7M692.8 285.0L959.0 286.7M696.9 285.0L959.0 286.7M705.3 285.0L959.0 286.6M709.4 285.0L959.0 286.6M713.6 285.0L959.0 286.5M717.8 285.0L959.0 286.5M722.0 285.0L959.0 286.5M726.1 285.0L959.0 286.5M730.3 285.0L959.0 286.4M734.5 285.0L959.0 286.4M738.7 285.0L959.0 286.4M747.0 285.0L959.0 286.3M751.2 285.0L959.0 286.3M755.3 285.0L959.0 286.3M759.5 285.0L959.0 286.2M763.7 285.0L959.0 286.2M767.9 285.0L959.0 286.2M772.0 285.0L959.0 286.1M776.2 285.0L959.0 286.1M780.4 285.0L959.0 286.1M788.7 285.0L959.0 286.0M792.9 285.0L959.0 286.0M797.1 285.0L959.0 286.0M801.2 285.0L959.0 285.9M805.4 285.0L959.0 285.9M809.6 285.0L959.0 285.9M813.8 285.0L959.0 285.9M817.9 285.0L959.0 285.8M822.1 285.0L959.0 285.8M830.4 285.0L959.0 285.8M834.6 285.0L959.0 285.7M838.8 285.0L959.0 285.7M843.0 285.0L959.0 285.7M847.1 285.0L959.0 285.7M851.3 285.0L959.0 285.6M855.5 285.0L959.0 285.6M859.7 285.0L959.0 285.6M863.8 285.0L959.0 285.6M872.2 285.0L959.0 285.5M876.3 285.0L959.0 285.5M880.5 285.0L959.0 285.5M884.7 285.0L959.0 285.4M888.9 285.0L959.0 285.4M893.0 285.0L959.0 285.4M897.2 285.0L959.0 285.4M901.4 285.0L959.0 285.3M905.6 285.0L959.0 285.3M913.9 285.0L959.0 285.3M918.1 285.0L959.0 285.2M922.2 285.0L959.0 285.2M926.4 285.0L959.0 285.2M930.6 285.0L959.0 285.2M934.8 285.0L959.0 285.1M938.9 285.0L959.0 285.1M943.1 285.0L959.0 285.1M947.3 285.0L959.0 285.1M955.6 285.0L959.0 285.0" stroke="#fff" stroke-opacity="0.66" stroke-width="1" fill="none" mask="url(#mk2)"/>
<path d="M2.0 285.0L0.0 285.0M18.1 285.0L0.0 285.3M34.1 285.0L0.0 285.6M50.1 285.0L0.0 285.8M66.2 285.0L0.0 286.1M82.2 285.0L-0.0 286.5M98.2 285.0L0.0 286.8M114.3 285.0L0.0 287.1M130.3 285.0L0.0 287.5M146.3 285.0L0.0 287.9M162.4 285.0L0.0 288.3M178.4 285.0L0.0 288.7M194.5 285.0L0.0 289.2M210.5 285.0L0.0 289.7M226.5 285.0L0.0 290.2M242.6 285.0L0.0 290.8M258.6 285.0L0.0 291.4M274.6 285.0L0.0 292.1M290.7 285.0L-0.0 292.8M306.7 285.0L0.0 293.5M322.7 285.0L0.0 294.3M338.8 285.0L0.0 295.2M354.8 285.0L0.0 296.2M370.8 285.0L0.0 297.3M386.9 285.0L0.0 298.5M402.9 285.0L0.0 299.8M419.0 285.0L0.0 301.2M435.0 285.0L0.0 302.9M451.0 285.0L0.0 304.7M467.1 285.0L-0.0 306.8M483.1 285.0L0.0 309.2M499.1 285.0L0.0 311.9M515.2 285.0L0.0 315.2M531.2 285.0L-0.0 319.0M547.2 285.0L0.0 323.6M563.3 285.0L0.0 329.3M579.3 285.0L0.0 336.5M595.3 285.0L0.0 345.8M611.4 285.0L0.0 358.4M627.4 285.0L0.0 376.3M643.5 285.0L0.0 403.8M659.5 285.0L0.0 451.6M675.5 285.0L0.0 555.2M691.6 285.0L292.5 668.0M707.6 285.0L866.9 668.0M723.6 285.0L959.0 410.6M739.7 285.0L959.0 350.8M755.7 285.0L959.0 327.4M771.7 285.0L959.0 315.0M787.8 285.0L959.0 307.2M803.8 285.0L959.0 301.9M819.8 285.0L959.0 298.1M835.9 285.0L959.0 295.2M851.9 285.0L959.0 292.9M867.9 285.0L959.0 291.1M884.0 285.0L959.0 289.6M900.0 285.0L959.0 288.3M916.1 285.0L959.0 287.2M932.1 285.0L959.0 286.3M948.1 285.0L959.0 285.5M0.0 446.5L959.0 606.5M0.0 379.6L959.0 477.6M0.0 350.1L959.0 420.7M0.0 333.5L959.0 388.7M0.0 322.8L959.0 368.1M0.0 315.4L959.0 353.8M0.0 310.0L959.0 343.3M0.0 305.8L959.0 335.2M0.0 302.4L959.0 328.8M0.0 299.8L959.0 323.7M0.0 297.5L959.0 319.4M0.0 295.7L959.0 315.8M0.0 294.1L959.0 312.7M0.0 292.7L959.0 310.0M0.0 291.5L959.0 307.7M0.0 290.4L959.0 305.7M0.0 289.5L959.0 303.9M0.0 288.7L959.0 302.3M0.0 287.9L959.0 300.8M0.0 287.2L959.0 299.5M0.0 286.6L959.0 298.3M0.0 286.1L959.0 297.3M0.0 285.6L959.0 296.3M0.0 285.1L959.0 295.4M33.5 285.0L959.0 294.5M75.2 285.0L959.0 293.8M116.9 285.0L959.0 293.0M158.7 285.0L959.0 292.4M200.4 285.0L959.0 291.8M242.1 285.0L959.0 291.2M283.8 285.0L959.0 290.6M325.6 285.0L959.0 290.1M367.3 285.0L959.0 289.6M409.0 285.0L959.0 289.2M450.7 285.0L959.0 288.8M492.5 285.0L959.0 288.4M534.2 285.0L959.0 288.0M575.9 285.0L959.0 287.6M617.6 285.0L959.0 287.3M659.4 285.0L959.0 286.9M701.1 285.0L959.0 286.6M742.8 285.0L959.0 286.3M784.5 285.0L959.0 286.1M826.3 285.0L959.0 285.8M868.0 285.0L959.0 285.5M909.7 285.0L959.0 285.3M951.5 285.0L959.0 285.0" stroke="#fff" stroke-opacity="1" stroke-width="1.3" fill="none" mask="url(#mk)"/>
<rect x="0" y="274" width="959" height="300" fill="url(#fog)"/>
</svg></div>
<svg class="ic" style="left:1309.7px;top:146.7px;stroke:#fff;stroke-width:1.25" width="23" height="23" viewBox="0 0 20 20"><circle cx="10" cy="10" r="2.2"/><path d="M8.3 1.800h3.400l.5 2.2 1.5.9 2.1-.7 1.7 2.9-1.6 1.500v1.800l1.6 1.5-1.7 2.9-2.1-.7-1.5.9-.5 2.200H8.300l-.5-2.2-1.5-.9-2.1.7-1.7-2.9 1.6-1.500V8.600L2.5 7.100l1.7-2.9 2.1.7 1.5-.9z"/></svg>
<svg class="ic" style="left:402.6px;top:763.1px;stroke:#f4f4f4;stroke-width:.9" width="16" height="26" viewBox="0 0 16 26"><rect x="1" y="1" width="14" height="24" rx="7"/><path d="M1.5 10V8a6.5 6.5 0 0 1 6.5-6.500V10z" fill="#fff" stroke="none"/></svg>
<svg class="ic" style="left:467.7px;top:763.1px;stroke:#f4f4f4;stroke-width:.9" width="16" height="26" viewBox="0 0 16 26"><rect x="1" y="1" width="14" height="24" rx="7"/><rect x="6.7" y="2.8" width="2.6" height="6.2" rx="1.1" fill="#fff" stroke="none"/></svg>
<svg class="ic" style="left:525.5px;top:763.1px;stroke:#f4f4f4;stroke-width:.9" width="16" height="26" viewBox="0 0 16 26"><rect x="1" y="1" width="14" height="24" rx="7"/><path d="M14.5 10V8A6.5 6.5 0 0 0 8 1.500V10z" fill="#fff" stroke="none"/></svg>
<div class="t hint" style="left:429.66px;top:766.3px;font-size:12px;letter-spacing:0.390px;">Orbit</div><div class="t hint" style="left:495.04px;top:766.3px;font-size:12px;letter-spacing:-0.640px;">Pan</div><div class="t hint" style="left:552.54px;top:766.3px;font-size:12px;letter-spacing:-0.530px;">Fly</div>
<svg class="abs" style="left:1220px;top:660px" width="110" height="115" viewBox="1220 660 110 115" font-family="Liberation Sans, sans-serif" font-weight="bold" font-size="15.5" text-anchor="middle">
<circle cx="1234.8" cy="717.3" r="7.9" fill="#9d4645"/><circle cx="1286.3" cy="714.5" r="7.9" fill="#3361bd"/><circle cx="1272.1" cy="758.6" r="7.9" fill="#2f973e"/>
<path d="M1272.1 716V688" stroke="#0c8c14" stroke-width="2"/><path d="M1276 718.400L1301 720" stroke="#d41616" stroke-width="1.8"/><path d="M1268 721L1262 723" stroke="#1838e8" stroke-width="1.8"/>
<circle cx="1272.1" cy="679.1" r="9.8" fill="#12b016"/><text x="1272.1" y="684.7" fill="#fff">Y</text>
<circle cx="1309.3" cy="720.2" r="9.8" fill="#ee0e0e"/><text x="1309.3" y="725.8" fill="#fff">X</text>
<circle cx="1257.6" cy="723.1" r="9.8" fill="#1a48f0"/><text x="1257.6" y="728.7" fill="#fff">Z</text>
<rect x="1267" y="714.9" width="10" height="8.2" fill="#f6ee00"/>
</svg>
<div class="abs" id="rightedge"></div><div class="abs" id="bottomedge"></div><div class="cn" id="ctr"></div><div class="cn" id="cbr"></div><div class="cn" id="cbl"></div>
<div class="abs" id="menu"><div class="abs" id="search"></div><div class="abs" id="mdiv"></div></div>
<svg class="ic" style="left:362.9px;top:105.8px;stroke:#c8c8c8;stroke-width:1.1" width="21.3" height="21.3" viewBox="0 0 20 20"><circle cx="8.5" cy="8.5" r="6"/><path d="M13 13l5 5"/></svg><div class="t m1" style="left:392.71px;top:108px;font-size:17.6px;letter-spacing:-0.611px;color:#a8a8a8">Search</div>
<svg class="ic" style="left:354.4px;top:171.3px;" width="22" height="22" viewBox="0 0 22 22"><path d="M11 .9l9.4 4.300a1.5 1.5 0 0 1 .9 1.400v8.800a1.5 1.5 0 0 1-.9 1.400L11 21.1 1.6 16.800a1.5 1.5 0 0 1-.9-1.400V6.600a1.5 1.5 0 0 1 .9-1.400z" fill="#d6d6d6" stroke="none"/><path d="M5.8 7.300L11 10.100l5.2-2.800M11 10.100v6" stroke="#272727" stroke-width="1.3"/></svg><div class="t m1" style="left:384.51px;top:174px;font-size:17.6px;letter-spacing:0.047px;">Objects &amp; Geometry</div><svg class="ic" style="left:583.0px;top:172.3px;" width="20" height="20" viewBox="0 0 20 20"><path d="M6.3 2.800l7.4 7.2-7.4 7.2"/></svg>
<svg class="ic" style="left:355.0px;top:214.2px;" width="22" height="22" viewBox="0 0 22 22"><rect x="0" y="0" width="22" height="22" rx="2.5" fill="#f0f0f0" stroke="none"/><path d="M10.8 0c.8 1.2-1 2-1 3.3 0 1.4 2 1.3 2 2.7 0 1.3-1.4 1.5-1.2 3M0 10.200c1.5-.4 2 .9 3.2.9 1.4 0 1.3-2 2.8-1.9 1.4.1 1.5 1.5 4.6 1.2 2-.2 1.6-2.1 3.2-2.1 1.5 0 1.4 1.7 2.8 1.6 1.4-.1 1.9-1.5 5.4-.6M10.6 10.400c1.5 1 2.5 1.3 2.3 2.7-.2 1.3-2.1 1.3-2.2 2.7-.1 1.4 1.6 1.7 1.2 3.3-.3 1.2-1 1.7-1 2.9" stroke="#272727" stroke-width="1.1"/></svg><div class="t m1" style="left:384.59px;top:216px;font-size:17.6px;letter-spacing:-0.004px;">Logic</div><svg class="ic" style="left:583.0px;top:214.3px;" width="20" height="20" viewBox="0 0 20 20"><path d="M6.3 2.800l7.4 7.2-7.4 7.2"/></svg>
<svg class="ic" style="left:354.7px;top:257.0px;" width="22" height="22" viewBox="0 0 22 22"><rect x=".7" y="1.5" width="14.6" height="14" rx="2.5" fill="#f4f4f4" stroke="none"/><path d="M4.2 11.300l2-2 1.3 1.3 1.4-1.3 2 2z" fill="#272727" stroke="none"/><circle cx="16.6" cy="19.2" r="3.4" fill="#272727" stroke="none"/><circle cx="16.6" cy="19.2" r="2.6" fill="#f4f4f4" stroke="none"/><path d="M19.2 19.200V11.600H22" stroke="#272727" stroke-width="3.6" stroke-linecap="butt"/><path d="M19.2 19.200V11.600H21.8" stroke="#f4f4f4" stroke-width="1.7" stroke-linecap="butt"/></svg><div class="t m1" style="left:384.59px;top:259px;font-size:17.6px;letter-spacing:0.190px;">Media</div><svg class="ic" style="left:583.0px;top:257.3px;" width="20" height="20" viewBox="0 0 20 20"><path d="M6.3 2.800l7.4 7.2-7.4 7.2"/></svg>
<svg class="ic" style="left:354.5px;top:299.2px;" width="22" height="22" viewBox="0 0 22 22"><path d="M11 .9a7.9 7.9 0 0 0-4.7 14.200c.5.4.8.9 1 1.400h7.400c.2-.5.5-1 1-1.400A7.9 7.9 0 0 0 11 .9z" fill="#d2d2d2" stroke="none"/><path d="M7.7 17.500h6.600l-.5 2.300a1.8 1.8 0 0 1-1.7 1.300h-2.200a1.8 1.8 0 0 1-1.7-1.300z" fill="#d2d2d2" stroke="none"/></svg><div class="t m1" style="left:384.59px;top:301px;font-size:17.6px;letter-spacing:0.006px;">Lights</div><svg class="ic" style="left:583.0px;top:299.3px;" width="20" height="20" viewBox="0 0 20 20"><path d="M6.3 2.800l7.4 7.2-7.4 7.2"/></svg>
<svg class="ic" style="left:353.4px;top:341.7px;" width="24" height="22" viewBox="0 0 24 22"><path d="M12 6.500v9" stroke="#f4f4f4" stroke-width="3.2" stroke-linecap="butt"/><path d="M.8 11h7.600M5.8 8.200L8.6 11l-2.8 2.800M23.2 11h-7.600M18.2 8.200L15.4 11l2.8 2.8" stroke="#f4f4f4" stroke-width="1.5"/></svg><div class="t m1" style="left:384.42px;top:344px;font-size:17.6px;letter-spacing:-0.059px;">Colliders</div><svg class="ic" style="left:583.0px;top:342.3px;" width="20" height="20" viewBox="0 0 20 20"><path d="M6.3 2.800l7.4 7.2-7.4 7.2"/></svg>
<svg class="ic" style="left:354.3px;top:383.4px;" width="24" height="22" viewBox="0 0 24 22"><path d="M12 2.500l3.9 5h-1.600l3.4 4.400h-2l3 4.300H5.300l3-4.300h-2l3.4-4.400H8.100z" fill="#f4f4f4" stroke="none"/><path d="M5.3 6.800l2.8 3.900H6.900l2.5 3.500H1.300l2.5-3.500H2.600zM18.7 6.800l2.8 3.900h-1.200l2.5 3.500h-8.200l2.5-3.500h-1.200z" fill="#f4f4f4" stroke="#272727" stroke-width=".9"/><path d="M12 16v3M5.3 14.200v4.800M18.7 14.200v4.8" stroke="#f4f4f4" stroke-width="1.7" stroke-linecap="butt"/></svg><div class="t m1" style="left:384.59px;top:386px;font-size:17.6px;letter-spacing:-0.113px;">Environment</div><svg class="ic" style="left:583.0px;top:384.3px;" width="20" height="20" viewBox="0 0 20 20"><path d="M6.3 2.800l7.4 7.2-7.4 7.2"/></svg>
<div class="abs" id="sub"><div class="abs" id="hl"></div></div>
<svg class="ic" style="left:628.7px;top:221.0px;" width="20" height="21" viewBox="0 0 20 21"><rect x="4.1" y="1.9" width="11.8" height="8" rx="2"/><path d="M10 0V1.9"/><rect x="6.7" y="5.3" width="1.5" height="1.6" fill="#e2e2e2" stroke-width=".5"/><rect x="11.8" y="5.3" width="1.5" height="1.6" fill="#e2e2e2" stroke-width=".5"/><path d="M1.8 13.600H18.200C18.2 17.5 15 20.4 10 20.400S1.8 17.5 1.8 13.600z"/></svg><div class="t m1" style="left:658.30px;top:223px;font-size:17.6px;letter-spacing:0.096px;">AI Agent</div><svg class="ic" style="left:759.4px;top:220.5px;" width="22" height="22" viewBox="0 0 22 22"><circle cx="11" cy="11" r="9.5"/><path d="M11 9.800v5.7M11 6.300v.3"/></svg>
<svg class="ic" style="left:626.5px;top:270.5px;" width="24" height="20" viewBox="0 0 24 20"><path d="M10.5 3.800H4.900A2.5 2.5 0 0 0 2.4 6.300v7.800a2.5 2.5 0 0 0 2.5 2.500H19a2.5 2.5 0 0 0 2.5-2.500V10"/><path d="M10.2 13.900h4.5"/><path d="M12.4 3h1.600L16.2.8v8L14 6.600h-1.600z" fill="#e2e2e2" stroke-width=".8"/><path d="M18 2.7a3 3 0 0 1 0 4.200M19.9 1.100a5.5 5.5 0 0 1 0 7.4" stroke-width="1.1"/></svg><div class="t m1" style="left:658.30px;top:272px;font-size:17.6px;letter-spacing:0.009px;">Audio Zone</div><svg class="ic" style="left:759.4px;top:269.5px;" width="22" height="22" viewBox="0 0 22 22"><circle cx="11" cy="11" r="9.5"/><path d="M11 9.800v5.7M11 6.300v.3"/></svg>
<svg class="ic" style="left:628.5px;top:319.6px;stroke:#f45cb5" width="20" height="20" viewBox="0 0 20 20"><rect x="2.2" y="2.2" width="15.7" height="15.7" rx="3.3"/><path d="M8.3 7.500L5.2 10.1 8.3 12.7M11.8 7.500L14.8 10.1 11.8 12.7"/></svg><div class="t m1" style="left:657.89px;top:321px;font-size:17.6px;letter-spacing:-0.227px;">Behaviour</div><svg class="ic" style="left:759.4px;top:318.5px;" width="22" height="22" viewBox="0 0 22 22"><circle cx="11" cy="11" r="9.5"/><path d="M11 9.800v5.7M11 6.300v.3"/></svg>
<svg class="ic" style="left:625.0px;top:364.3px;" width="28" height="28" viewBox="0 0 20 20"><ellipse cx="9.8" cy="4.8" rx="5.5" ry="2.1"/><path d="M4.3 4.800V14.600c0 1.2 2.1 2.1 4.7 2.200M15.3 4.800V9"/><path d="M14 10h3.200l-1.2 2.500h2.500L12.8 18.300l1.2-4H11.800z" fill="#e2e2e2" stroke="none"/></svg><div class="t m1" style="left:657.89px;top:370px;font-size:17.6px;letter-spacing:-0.412px;">Persistable</div><svg class="ic" style="left:759.4px;top:367.5px;" width="22" height="22" viewBox="0 0 22 22"><circle cx="11" cy="11" r="9.5"/><path d="M11 9.800v5.7M11 6.300v.3"/></svg>
<svg class="ic" style="left:627.8px;top:416.0px;" width="21.6" height="21.6" viewBox="0 0 20 20"><ellipse cx="10" cy="4.5" rx="5.5" ry="2.5"/><path d="M4.5 4.500v11c0 1.4 2.5 2.5 5.5 2.500s5.5-1.1 5.5-2.500v-11"/></svg><div class="t m1" style="left:658.30px;top:419px;font-size:17.6px;letter-spacing:-0.825px;">Asset</div><svg class="ic" style="left:759.4px;top:416.5px;" width="22" height="22" viewBox="0 0 22 22"><circle cx="11" cy="11" r="9.5"/><path d="M11 9.800v5.7M11 6.300v.3"/></svg>
<svg class="abs" style="left:790px;top:323px" width="8" height="12" viewBox="0 0 8 12"><path d="M0 6L8 0V12z" fill="#262626"/></svg><div class="abs" id="tip"><div class="t tp" style="left:14.13px;top:7.3px;font-size:14.6px;letter-spacing:0.222px;">Behaviors let you add custom logic to</div><div class="t tp" style="left:14.53px;top:27.6px;font-size:14.6px;letter-spacing:-0.010px;">scene objects using extended JavaScript</div><div class="t tp" style="left:14.53px;top:47.9px;font-size:14.6px;letter-spacing:0.401px;">scripting.</div></div>
</body></html>
